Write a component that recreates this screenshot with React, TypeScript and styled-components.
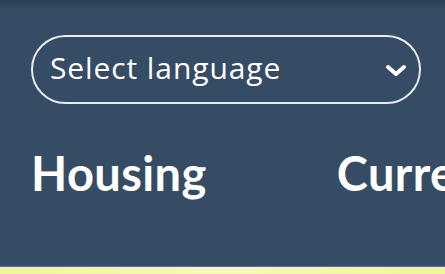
import styled, { createGlobalStyle } from 'styled-components';

const GlobalStyle = createGlobalStyle`
  html, body {
    margin: 0;
    padding: 0;
    background: #364b64;
  }
  body {
    font-family: Lato, "Open Sans", "Liberation Sans", sans-serif;
    overflow: hidden;
  }
`;

const Page = styled.div`
  width: 445px;
  height: 274px;
  display: flex;
  flex-direction: column;
  overflow: hidden;
`;

const Header = styled.header`
  flex: 1;
  display: flex;
  flex-direction: column;
  padding: 35px 0 0 31px;
  background: linear-gradient(to bottom, #2d3f55 0px, #364b64 9px, #364b64 100%);
  border-bottom: 1px solid #5d7186;
  overflow: hidden;
`;

const SelectWrap = styled.div`
  position: relative;
  width: 390px;
`;

const Select = styled.select`
  appearance: none;
  -webkit-appearance: none;
  width: 100%;
  height: 69px;
  box-sizing: border-box;
  padding: 0 60px 4px 17px;
  border: 2px solid #e8ecf0;
  border-radius: 35px;
  background: transparent;
  color: #ffffff;
  font-family: "Open Sans", Lato, sans-serif;
  font-size: 30px;
  letter-spacing: 0.9px;
  outline: none;
`;

const Chevron = styled.svg`
  position: absolute;
  right: 13px;
  top: 28px;
  pointer-events: none;
`;

const Nav = styled.nav`
  display: flex;
  gap: 130px;
  margin-top: 41px;
  white-space: nowrap;
`;

const NavItem = styled.a`
  flex-shrink: 0;
  color: #ffffff;
  font-size: 47px;
  font-weight: 700;
  letter-spacing: 0.4px;
  text-decoration: none;
  line-height: 1.2;
`;

const Stripe = styled.div`
  height: 7px;
  background: linear-gradient(to right, #eef59a, #f6f9b4 50%, #eef59a);
`;

export default function App() {
  return (
    <Page>
      <GlobalStyle />
      <Header>
        <SelectWrap>
          <Select defaultValue="">
            <option value="">Select language</option>
            <option value="en">English</option>
            <option value="fr">Français</option>
          </Select>
          <Chevron width="24" height="16" viewBox="0 0 24 16" fill="none">
            <path d="M4 4 L12 11 L20 4" stroke="#ffffff" strokeWidth="4" strokeLinecap="round" strokeLinejoin="round" />
          </Chevron>
        </SelectWrap>
        <Nav>
          <NavItem href="#">Housing</NavItem>
          <NavItem href="#">Currency</NavItem>
        </Nav>
      </Header>
      <Stripe />
    </Page>
  );
}
